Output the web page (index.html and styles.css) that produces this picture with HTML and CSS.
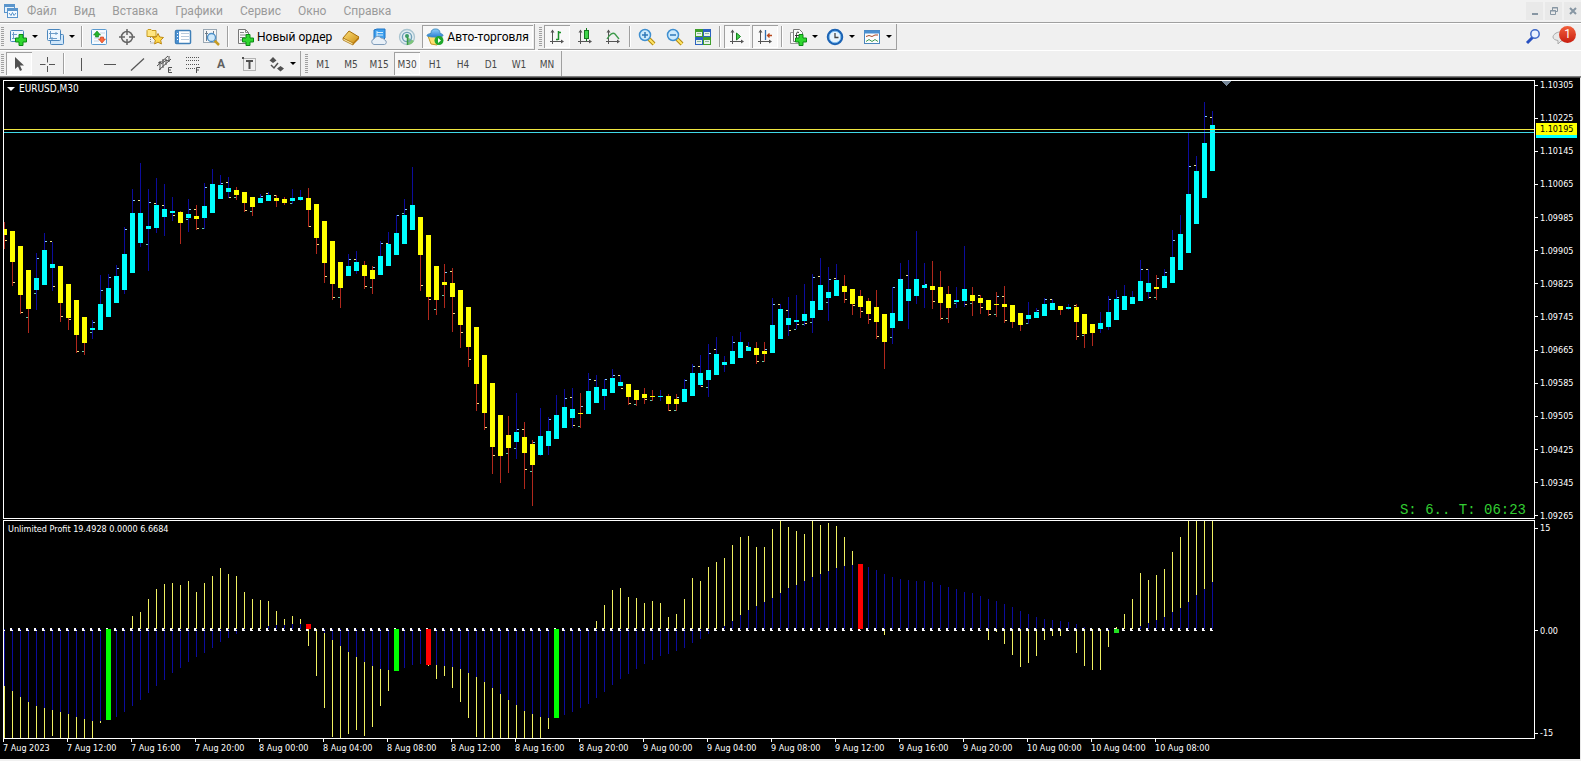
FILE: index.html
```
<!DOCTYPE html>
<html lang="ru">
<head>
    <meta charset="UTF-8">
    <meta name="viewport" content="width=device-width, initial-scale=1.0">
    <title>EURUSD,M30</title>
    <link rel="stylesheet" href="styles.css">
</head>
<body>
    <!-- shared icon parts -->
    <svg class="defs" aria-hidden="true">
        <defs>
            <linearGradient id="blueFill" x1="0" y1="0" x2="0" y2="1">
                <stop offset="0" stop-color="#8fd0fb"/>
                <stop offset="1" stop-color="#2a7fd4"/>
            </linearGradient>
            <linearGradient id="goldFill" x1="0" y1="0" x2="1" y2="1">
                <stop offset="0" stop-color="#ffe27a"/>
                <stop offset="1" stop-color="#c98a12"/>
            </linearGradient>
            <symbol id="plus" viewBox="0 0 12 12">
                <path d="M4 .5h4V4h3.500v4H8v3.500H4V8H.5V4H4z" fill="#2fd62f" stroke="#0a8a14"/>
            </symbol>
            <symbol id="axes" viewBox="0 0 18 18">
                <path d="M4.500 2v14M2 13.500h13" stroke="#555" fill="none"/>
                <path d="M2.500 4.500l2-3 2 3zM13 11.500l3 2-3 2z" fill="#555"/>
            </symbol>
            <symbol id="lens" viewBox="0 0 18 18">
                <path d="M11 11l5 5" stroke="#b48a10" stroke-width="4"/>
                <path d="M11 11l5 5" stroke="#ffe566" stroke-width="2"/>
                <circle cx="7" cy="7" r="5.500" fill="#cdeafc" stroke="#3f8fd0" stroke-width="1.500"/>
            </symbol>
        </defs>
    </svg>

    <header class="menubar">
        <svg class="app-icon" viewBox="0 0 16 16" aria-hidden="true">
            <rect x="1.500" y="1.500" width="10" height="8" fill="#e8f3fc" stroke="#5b95cc"/>
            <path d="M1 3h11" stroke="#5b95cc" stroke-width="2"/>
            <rect x="4.500" y="5.500" width="10" height="9" fill="#f4faff" stroke="#5b95cc"/>
            <path d="M4 7h11" stroke="#5b95cc" stroke-width="2"/>
            <path d="M6 10l2 2.500 1.500-3 1.500 3 2-2.500" stroke="#5b95cc" fill="none"/>
        </svg>
        <nav class="menu">
            <button>Файл</button>
            <button>Вид</button>
            <button>Вставка</button>
            <button>Графики</button>
            <button>Сервис</button>
            <button>Окно</button>
            <button>Справка</button>
        </nav>
        <div class="window-buttons">
            <button aria-label="Свернуть"><svg viewBox="0 0 10 10"><path d="M2 8h6" stroke="#8796a3" stroke-width="2"/></svg></button>
            <button aria-label="Восстановить"><svg viewBox="0 0 10 10"><path d="M3.500 4V1.500h5v4H7M3 2h6M1.500 4.500h5v4h-5zM1 5h6" stroke="#8796a3" fill="none"/></svg></button>
            <button aria-label="Закрыть"><svg viewBox="0 0 10 10"><path d="M2 2l6 6M8 2l-6 6" stroke="#8796a3" stroke-width="2"/></svg></button>
        </div>
    </header>

    <div class="toolbar-row">
        <div class="toolbar">
            <span class="grip"></span>
            <button class="tool dropdown" aria-label="Новый график">
                <svg class="icon" viewBox="0 0 18 18">
                    <rect x="1.500" y="2.500" width="13" height="11" rx="1" fill="#eef7ff" stroke="#4a86bd"/>
                    <path d="M4.500 4v7M3 10.500h6M3 6.500h5" stroke="#6d9cc8" fill="none"/>
                    <use href="#plus" x="6" y="6" width="12" height="12"/>
                </svg>
            </button>
            <button class="tool dropdown" aria-label="Профили">
                <svg class="icon" viewBox="0 0 18 18">
                    <rect x="4.500" y="6.500" width="13" height="10" rx="1" fill="#cfe6fa" stroke="#4a86bd"/>
                    <rect x="1.500" y="1.500" width="13" height="11" rx="1" fill="#eef7ff" stroke="#4a86bd"/>
                    <path d="M4.500 3v8M3 5.500h9M3 10.500h8M10 4v3M6 9v3" stroke="#6d9cc8" fill="none"/>
                </svg>
            </button>
            <span class="sep"></span>
            <button class="tool" aria-label="Обзор рынка">
                <svg class="icon" viewBox="0 0 18 18">
                    <rect x="1.500" y="1.500" width="15" height="15" rx="1" fill="#f5faff" stroke="#5b9bd0"/>
                    <path d="M4 10h10M4 13h5M10 5h5" stroke="#c5d4e2"/>
                    <path d="M7 3l3.500 4H8.500v2h-3V7h-2z" fill="#22b52c" stroke="#11801a" stroke-width=".6"/>
                    <path d="M12 15l-3.500-4h2V9h3v2h2z" fill="#ff6a3c" stroke="#c0391a" stroke-width=".6"/>
                </svg>
            </button>
            <button class="tool" aria-label="Окно данных">
                <svg class="icon" viewBox="0 0 18 18">
                    <circle cx="9" cy="9" r="5.500" fill="none" stroke="#666" stroke-width="1.500"/>
                    <path d="M9 1v6M9 11v6M1 9h6M11 9h6" stroke="#666" stroke-width="1.500"/>
                </svg>
            </button>
            <button class="tool" aria-label="Навигатор">
                <svg class="icon" viewBox="0 0 18 18">
                    <path d="M1 2.500l1-1h3l1 1h4v6H1z" fill="#ffe680" stroke="#c79a20"/>
                    <path d="M4.500 9v6h4" stroke="#888" stroke-dasharray="1 1" fill="none"/>
                    <path d="M12 5.500l1.700 3.500 3.800.500-2.800 2.700.700 3.800-3.400-1.900-3.400 1.900.700-3.800L6.500 9.500l3.800-.500z" fill="#ffd84a" stroke="#bd8914"/>
                </svg>
            </button>
            <button class="tool" aria-label="Терминал">
                <svg class="icon" viewBox="0 0 18 18">
                    <rect x="1.500" y="2.500" width="15" height="13" rx="1" fill="#fff" stroke="#3f7fb8" stroke-width="1.500"/>
                    <rect x="2" y="3" width="3" height="12" fill="#4a8fd0"/>
                    <path d="M7 5.500h8M7 8.500h8M7 11.500h8" stroke="#b9cbdd"/>
                    <path d="M3 5.500h1M3 8.500h1M3 11.500h1" stroke="#fff"/>
                </svg>
            </button>
            <button class="tool" aria-label="Тестер стратегий">
                <svg class="icon" viewBox="0 0 18 18">
                    <rect x="1.500" y="1.500" width="13" height="13" fill="#f6f6f6" stroke="#9aa8b4"/>
                    <path d="M4.500 3v10M3 5.500h3M11.500 3v4" stroke="#6b7c8c"/>
                    <path d="M12 12l5 5" stroke="#c79b22" stroke-width="2.500"/>
                    <circle cx="9.500" cy="9.500" r="4" fill="#cfe9fb" stroke="#4b8fc8" stroke-width="1.300"/>
                </svg>
            </button>
            <span class="sep"></span>
            <button class="tool labelled">
                <svg class="icon" viewBox="0 0 18 18">
                    <path d="M2.500 1.500h7l3 3v11h-10z" fill="#fafafa" stroke="#777"/>
                    <path d="M9.500 1.500v3h3M4 4.500h4M4 7h7M4 9.500h5M4 12h3" stroke="#888" fill="none"/>
                    <use href="#plus" x="6" y="6" width="12" height="12"/>
                </svg>
                <span>Новый ордер</span>
            </button>
            <button class="tool" aria-label="MetaEditor">
                <svg class="icon" viewBox="0 0 18 18">
                    <path d="M1 10l6-7 10 6-6 7z" fill="url(#goldFill)" stroke="#a8700c"/>
                    <path d="M1 10l10 5v2L1 12z" fill="#fff0b0" stroke="#a8700c" stroke-width=".8"/>
                    <path d="M11 15l6-6v2l-6 6z" fill="#b8780c"/>
                </svg>
            </button>
            <button class="tool" aria-label="Виртуальный хостинг">
                <svg class="icon" viewBox="0 0 18 18">
                    <path d="M4 2l3-1h8v9l-2 2H4z" fill="#3fa0ee" stroke="#1f74c4"/>
                    <path d="M7 3v7M7 4.500h6M7 7h6" stroke="#d8efff" fill="none"/>
                    <path d="M4 16.500a2.800 2.800 0 0 1 0-5.500 4 4 0 0 1 7-1 3 3 0 0 1 3.500 2 2.300 2.300 0 0 1 0 4.500z" fill="#e9f0f7" stroke="#7f9cba"/>
                </svg>
            </button>
            <button class="tool" aria-label="Сигналы">
                <svg class="icon" viewBox="0 0 18 18">
                    <circle cx="9" cy="9" r="7.500" fill="#e4eef2" stroke="#a9c4d0" stroke-width="1.300"/>
                    <path d="M9 9v8a8 8 0 0 0 7-4z" fill="#7cc47c"/>
                    <circle cx="9" cy="9" r="4.600" fill="none" stroke="#6f9fb8" stroke-width="1.400"/>
                    <circle cx="9" cy="8" r="2" fill="#3b9a66"/>
                    <path d="M9.500 9v8" stroke="#3b9a46" stroke-width="1.500"/>
                </svg>
            </button>
            <button class="tool labelled pressed">
                <svg class="icon" viewBox="0 0 18 18">
                    <path d="M2 8l3 8 6 1 5-9z" fill="#ffe070" stroke="#c49a26"/>
                    <path d="M5 5.500C5 2 7 1 9.500 1S14 2 14 5.500c2 .3 3 1 3 2 0 1-4 1.500-8 1.500S1 8.500 1 7.500s2-1.700 4-2z" fill="url(#blueFill)" stroke="#3f8cc0"/>
                    <circle cx="13" cy="12.500" r="4.500" fill="#1fa82c"/>
                    <path d="M12 10v5l3-2.500z" fill="#fff"/>
                </svg>
                <span>Авто-торговля</span>
            </button>
        </div>
        <div class="toolbar">
            <span class="grip"></span>
            <button class="tool pressed" aria-label="Бары">
                <svg class="icon" viewBox="0 0 18 18"><use href="#axes"/><path d="M10.500 3v9M10 11.500H8M11 4.500h2" stroke="#1b8f28" stroke-width="1.500"/></svg>
            </button>
            <button class="tool" aria-label="Свечи">
                <svg class="icon" viewBox="0 0 18 18"><use href="#axes"/><path d="M10.500 0v13" stroke="#147a1e"/><rect x="8.500" y="2.500" width="4" height="8" fill="#3fd44a" stroke="#147a1e"/></svg>
            </button>
            <button class="tool" aria-label="Линия">
                <svg class="icon" viewBox="0 0 18 18"><use href="#axes"/><path d="M3 11c3-5 6-7 8-5l4 5" stroke="#3c9a4a" stroke-width="1.300" fill="none"/></svg>
            </button>
            <span class="sep"></span>
            <button class="tool" aria-label="Увеличить">
                <svg class="icon" viewBox="0 0 18 18"><use href="#lens"/><path d="M4 7h6M7 4v6" stroke="#2f78b8" stroke-width="1.500"/></svg>
            </button>
            <button class="tool" aria-label="Уменьшить">
                <svg class="icon" viewBox="0 0 18 18"><use href="#lens"/><path d="M4 7h6" stroke="#2f78b8" stroke-width="1.500"/></svg>
            </button>
            <button class="tool" aria-label="Выстроить окна">
                <svg class="icon" viewBox="0 0 18 18">
                    <path d="M1 1h8v8H1zM9 9h8v8H9z" fill="#3f9e2c"/>
                    <path d="M9 1h8v8H9zM1 9h8v8H1z" fill="#2c62c0"/>
                    <path d="M2 4h6v4H2zM10 4h6v4h-6zM2 12h6v4H2zM10 12h6v4h-6z" fill="#e9f3ea"/>
                    <path d="M3 5.500h4M11 5.500h4M3 13.500h4M11 13.500h4" stroke="#8db59a"/>
                </svg>
            </button>
            <span class="sep"></span>
            <button class="tool pressed" aria-label="Автопрокрутка">
                <svg class="icon" viewBox="0 0 18 18"><use href="#axes"/><path d="M8.500 5v7l4-3.500z" fill="#45cf4c" stroke="#14801e"/></svg>
            </button>
            <button class="tool pressed" aria-label="Сдвиг графика">
                <svg class="icon" viewBox="0 0 18 18"><use href="#axes"/><path d="M9.500 2v10" stroke="#2f6fb0" stroke-width="1.300"/><path d="M16 7.500h-4M13.500 5.500l-2 2 2 2" stroke="#b8481c" stroke-width="1.300" fill="none"/></svg>
            </button>
            <span class="sep"></span>
            <button class="tool dropdown" aria-label="Индикаторы">
                <svg class="icon" viewBox="0 0 18 18">
                    <path d="M1.500 4.500h8v11h-8z" fill="#fafafa" stroke="#999"/>
                    <path d="M4.500 1.500h6l3 3v9h-9z" fill="#fafafa" stroke="#777"/>
                    <path d="M10 4.500c-2-1-2.500 0-2.500 2V11M6 7.500h4" stroke="#333" fill="none"/>
                    <use href="#plus" x="6" y="6" width="12" height="12"/>
                </svg>
            </button>
            <button class="tool dropdown" aria-label="Периоды">
                <svg class="icon" viewBox="0 0 18 18">
                    <circle cx="9" cy="9" r="7" fill="#e8f4fd" stroke="#1c63b4" stroke-width="2.500"/>
                    <circle cx="9" cy="9" r="5.800" fill="none" stroke="#7fbdf0"/>
                    <path d="M9 5v4.500h3.500" stroke="#444" stroke-width="1.300" fill="none"/>
                </svg>
            </button>
            <button class="tool dropdown" aria-label="Шаблоны">
                <svg class="icon" viewBox="0 0 18 18">
                    <rect x="1.500" y="2.500" width="15" height="13" fill="#fdfdfd" stroke="#4a86bd"/>
                    <path d="M1 4h16" stroke="#4a8fd0" stroke-width="3"/>
                    <path d="M3 8.500l3-1 3 1 3-1.500h3" stroke="#a84a2a" fill="none"/>
                    <path d="M3 13.500l3-2 3 2 3-2 3 2" stroke="#3d9a50" fill="none"/>
                </svg>
            </button>
        </div>
        <div class="status-tools">
            <button class="tool" aria-label="Поиск">
                <svg class="icon" viewBox="0 0 18 18"><path d="M9 10l-6 6" stroke="#2850c0" stroke-width="3"/><circle cx="11" cy="7" r="4.200" fill="#eaf2ff" stroke="#3f69c8" stroke-width="1.500"/></svg>
            </button>
            <button class="tool chat" aria-label="Сообщения">
                <svg class="icon" viewBox="0 0 18 18"><path d="M8 5c5 0 8 2 8 5s-3 4-7 4l-3 3v-3.500C3 13 1 12 1 10s3-5 7-5z" fill="#e8e8e8" stroke="#aaa"/></svg>
                <span class="badge">1</span>
            </button>
        </div>
    </div>

    <div class="toolbar-row second">
        <div class="toolbar">
            <span class="grip"></span>
            <button class="tool pressed" aria-label="Курсор">
                <svg class="icon" viewBox="0 0 18 18"><path d="M5 2v12l3-2.500 2 4.500 2-1-2-4.500h4z" fill="#505050"/></svg>
            </button>
            <button class="tool" aria-label="Перекрестие">
                <svg class="icon" viewBox="0 0 18 18"><path d="M9.500 2v5.500M9.500 11v6M2 9.500h5.500M11 9.500h6" stroke="#555"/></svg>
            </button>
            <span class="sep"></span>
            <button class="tool" aria-label="Вертикальная линия">
                <svg class="icon" viewBox="0 0 18 18"><path d="M9.500 3v13" stroke="#555"/></svg>
            </button>
            <button class="tool" aria-label="Горизонтальная линия">
                <svg class="icon" viewBox="0 0 18 18"><path d="M4 9.500h12" stroke="#555"/></svg>
            </button>
            <button class="tool" aria-label="Трендовая линия">
                <svg class="icon" viewBox="0 0 18 18"><path d="M3 15.500l13-12" stroke="#555" stroke-width="1.200"/></svg>
            </button>
            <button class="tool" aria-label="Канал">
                <svg class="icon" viewBox="0 0 18 18">
                    <path d="M1 11L12 1M3 15L15 4M4 6v9M7 4v9M10 4v6M13 1v6M2 8l3-1M5 9l4-3M9 5l4 1" stroke="#505050" fill="none"/>
                    <path d="M16 12.500h-3.500v5H16M12.500 15H15" stroke="#505050" fill="none"/>
                </svg>
            </button>
            <button class="tool" aria-label="Фибоначчи">
                <svg class="icon" viewBox="0 0 18 18">
                    <path d="M2 2.500h14M2 5.500h14M2 9.500h14M2 13.500h9" stroke="#555" stroke-dasharray="1 1"/>
                    <path d="M16 12.500h-3.500V18M12.500 15H15" stroke="#505050" fill="none"/>
                </svg>
            </button>
            <button class="tool letter">A</button>
            <button class="tool" aria-label="Текстовая метка">
                <svg class="icon" viewBox="0 0 18 18"><rect x="3.500" y="3.500" width="12" height="12" fill="none" stroke="#777" stroke-dasharray="1 1"/><path d="M6 6h7M9.500 6v8" stroke="#505050" stroke-width="2"/><path d="M2 2h2v2H2z" fill="#505050"/></svg>
            </button>
            <button class="tool dropdown" aria-label="Стрелки">
                <svg class="icon" viewBox="0 0 18 18"><path d="M6 2l3.500 3.500L6 8 2.500 5.500zM13.500 11l3.500 2.500-3.500 3-3.500-3z" fill="#505050"/><path d="M4 10l3 3 4-5" stroke="#505050" stroke-width="1.500" fill="none"/></svg>
            </button>
        </div>
        <div class="toolbar">
            <span class="grip"></span>
            <button class="tool period">M1</button>
            <button class="tool period">M5</button>
            <button class="tool period">M15</button>
            <button class="tool period pressed">M30</button>
            <button class="tool period">H1</button>
            <button class="tool period">H4</button>
            <button class="tool period">D1</button>
            <button class="tool period">W1</button>
            <button class="tool period">MN</button>
        </div>
    </div>

    <main class="chart">
        <div class="panes">
            <section class="pane">
                <svg id="price" class="plot price-plot"></svg>
                <h1 class="pane-title symbol"><span class="triangle"></span>EURUSD,M30</h1>
                <p class="countdown">S: 6.. T: 06:23</p>
            </section>
            <section class="pane">
                <svg id="profit" class="plot profit-plot"></svg>
                <h2 class="pane-title">Unlimited Profit 19.4928 0.0000 6.6684</h2>
            </section>
        </div>
        <div class="axes">
            <ul class="scale price-scale">
                <li>1.10305</li>
                <li>1.10225</li>
                <li>1.10145</li>
                <li>1.10065</li>
                <li>1.09985</li>
                <li>1.09905</li>
                <li>1.09825</li>
                <li>1.09745</li>
                <li>1.09665</li>
                <li>1.09585</li>
                <li>1.09505</li>
                <li>1.09425</li>
                <li>1.09345</li>
                <li>1.09265</li>
            </ul>
            <ul class="scale profit-scale">
                <li>15</li>
                <li>0.00</li>
                <li>-15</li>
            </ul>
            <span class="price-tag">1.10195</span>
        </div>
        <ul class="times">
            <li>7 Aug 2023</li>
            <li>7 Aug 12:00</li>
            <li>7 Aug 16:00</li>
            <li>7 Aug 20:00</li>
            <li>8 Aug 00:00</li>
            <li>8 Aug 04:00</li>
            <li>8 Aug 08:00</li>
            <li>8 Aug 12:00</li>
            <li>8 Aug 16:00</li>
            <li>8 Aug 20:00</li>
            <li>9 Aug 00:00</li>
            <li>9 Aug 04:00</li>
            <li>9 Aug 08:00</li>
            <li>9 Aug 12:00</li>
            <li>9 Aug 16:00</li>
            <li>9 Aug 20:00</li>
            <li>10 Aug 00:00</li>
            <li>10 Aug 04:00</li>
            <li>10 Aug 08:00</li>
        </ul>
    </main>

    <script src="chart.js"></script>
</body>
</html>
```
FILE: styles.css
```
* {
    box-sizing: border-box;
}

body {
    margin: 0;
    font-family: Roboto, "Open Sans", sans-serif;
    font-size: 12px;
    background-color: #f0f0f0;
    color: #000;
}

button {
    font: inherit;
    color: inherit;
    background: none;
    border: none;
    padding: 0;
    margin: 0;
}

ul {
    list-style: none;
    margin: 0;
    padding: 0;
}

svg {
    display: block;
}

.defs {
    position: absolute;
    width: 0;
    height: 0;
}

/* menu */
.menubar {
    display: flex;
    align-items: center;
    height: 23px;
    padding-left: 3px;
    border-bottom: 1px solid #a0a0a0;
    background-color: #f1f1f1;
}

.app-icon {
    width: 16px;
    height: 16px;
}

.menu {
    display: flex;
    flex: 1;
    gap: 17px;
    padding-left: 8px;
    color: #9a9a9a;
}

.window-buttons {
    display: flex;
    gap: 2px;
}

.window-buttons button {
    display: flex;
    align-items: center;
    justify-content: center;
    width: 17px;
    height: 18px;
    background-color: #e9e9e9;
}

.window-buttons svg {
    width: 10px;
    height: 10px;
}

/* toolbars */
.toolbar-row {
    display: flex;
    gap: 3px;
    height: 27px;
    border-top: 1px solid #fff;
}

.toolbar {
    display: flex;
    align-items: center;
    gap: 2px;
    padding: 0 1px;
    border-right: 1px solid #a0a0a0;
    border-bottom: 1px solid #a0a0a0;
}

.second {
    border-bottom: 1px solid #808080;
}

.second .toolbar {
    border-bottom: none;
}

.grip {
    width: 3px;
    height: 20px;
    background: repeating-linear-gradient(#a0a0a0 0 1px, #f0f0f0 1px 2px);
}

.sep {
    width: 2px;
    height: 21px;
    margin: 0 1px;
    border-left: 1px solid #a0a0a0;
    border-right: 1px solid #fff;
}

.tool {
    display: flex;
    align-items: center;
    justify-content: center;
    width: 26px;
    height: 23px;
}

.icon {
    width: 18px;
    height: 18px;
    flex: none;
}

.dropdown {
    width: 35px;
    justify-content: flex-start;
    gap: 5px;
    padding-left: 3px;
}

.dropdown::after {
    content: "";
    border: 3px solid transparent;
    border-top-color: #000;
    border-bottom: none;
}

.labelled {
    width: auto;
    padding: 0 4px;
    gap: 3px;
}

.pressed {
    background-color: #f8f8f8;
    box-shadow: inset 1px 1px #a0a0a0, inset -1px -1px #fff;
}

.letter {
    font-weight: bold;
    color: #606060;
}

.period {
    padding-top: 2px;
    font-family: "DejaVu Sans Condensed", "DejaVu Sans", sans-serif;
    font-size: 10px;
    color: #484848;
}

.status-tools {
    display: flex;
    gap: 2px;
    margin-left: auto;
    padding-right: 7px;
}

.chat {
    position: relative;
}

.badge {
    position: absolute;
    top: 2px;
    right: -2px;
    width: 17px;
    border-radius: 50%;
    background: linear-gradient(#f2603c, #c81e10);
    color: #fff;
    line-height: 17px;
    text-align: center;
}

/* chart */
.chart {
    display: grid;
    grid-template-columns: 1fr 45px;
    padding-left: 3px;
    border-top: 1px solid #404040;
    border-left: 1px solid #606060;
    border-right: 1px solid #e8e8e8;
    background-color: #000;
    color: #fff;
    font-family: "DejaVu Sans Condensed", "DejaVu Sans", sans-serif;
    font-size: 9px;
    line-height: 12px;
    margin-left: -1px;
}

.panes {
    display: flex;
    flex-direction: column;
    gap: 1px;
    padding-top: 2px;
    min-width: 0;
}

.pane {
    position: relative;
    border: 1px solid #fff;
}

.plot {
    width: 100%;
    shape-rendering: crispEdges;
}

.price-plot {
    height: 437px;
}

.profit-plot {
    height: 217px;
}

.pane-title {
    position: absolute;
    top: 2px;
    left: 4px;
    display: flex;
    align-items: center;
    gap: 4px;
    margin: 0;
    font-size: inherit;
    font-weight: normal;
}

.symbol {
    left: 3px;
    font-size: 10px;
}

.triangle {
    border: 4px solid transparent;
    border-top-color: #fff;
    border-bottom: none;
}

.countdown {
    position: absolute;
    right: 8px;
    bottom: 2px;
    margin: 0;
    font-family: "Liberation Mono", monospace;
    font-size: 14px;
    color: #32cd32;
}

.axes {
    position: relative;
    display: flex;
    flex-direction: column;
    padding-top: 1px;
}

.scale {
    display: flex;
    flex-direction: column;
    justify-content: space-between;
}

.scale li {
    display: flex;
    align-items: center;
    gap: 2px;
}

.scale li::before {
    content: "";
    width: 3px;
    height: 1px;
    background-color: #fff;
}

.price-scale {
    height: 443px;
}

.profit-scale {
    flex: 1;
}

.price-tag {
    position: absolute;
    top: 45px;
    left: 1px;
    width: 41px;
    padding-left: 4px;
    background-color: #ff0;
    border-bottom: 3px solid #0ff;
    color: #000;
}

.times {
    display: flex;
    grid-column: 1 / -1;
    height: 20px;
}

.times li {
    width: 64px;
    white-space: nowrap;
}

.times li::before {
    content: "";
    display: block;
    width: 1px;
    height: 3px;
    background-color: #fff;
}
```
FILE: chart.js
```
const NS = "http://www.w3.org/2000/svg";
const STEP = 8;

// d = down / u = up, then high, body top, body bottom, low
const candles = `
d222,229,235,249 d231,231,262,286 d246,246,295,314 d270,270,309,333 u253,278,290,310
u233,250,285,285 u242,264,268,291 d266,266,303,322 d284,284,318,330 d300,300,335,353
d317,317,343,355 u320,328,330,339 u275,304,330,330 u274,288,317,317 u265,276,303,303
u227,254,290,294 u189,213,273,273 u163,213,243,247 u189,226,229,271 u178,205,228,233
u184,209,217,236 u197,211,213,221 d211,212,223,244 u199,214,218,232 d205,216,219,230
u183,206,218,229 u169,184,213,213 u175,185,199,199 u177,188,192,198 d187,190,195,200
d192,192,203,212 d197,197,207,216 u194,198,203,203 u192,195,201,201 d195,198,201,207
d197,199,203,205 u189,198,201,204 u190,197,200,201 d188,198,210,227 d204,204,238,254
d221,221,263,283 d241,241,284,300 d262,262,288,308 u254,266,276,276 u251,262,271,274
d261,265,276,289 d266,270,279,294 u241,256,275,275 u232,244,266,266 u215,233,255,255
u199,215,244,244 u167,205,230,230 d217,217,255,291 d235,235,297,320 d266,266,300,315
d264,282,285,308 d268,283,297,332 d290,290,325,348 d307,307,347,367 d327,327,384,411
d355,355,413,430 d383,383,447,474 d415,415,456,483 d416,435,448,473 u393,432,442,459
d422,437,453,489 d440,444,465,506 u408,436,455,456 u417,431,446,455 u395,415,439,439
u389,407,428,428 u388,409,418,428 d393,413,414,428 u373,391,414,414 u375,387,403,403
u379,389,396,410 u369,378,393,393 u375,382,386,386 d384,384,397,405 d390,390,400,406
d388,394,398,404 d390,396,397,401 u390,396,397,401 d394,396,404,411 d394,399,404,411
u379,389,402,402 u364,373,396,396 u355,373,385,387 u344,370,380,397 u337,354,375,375
u356,362,365,372 u336,351,364,364 u332,342,358,358 u342,347,351,351 d342,348,355,364
d342,351,354,362 u298,325,353,353 u304,309,339,339 u297,318,325,336 u295,320,322,329
u284,314,321,326 u274,301,318,333 u258,285,310,310 u267,292,298,321 u264,280,296,296
d275,286,292,303 d289,289,304,315 d290,296,307,318 d298,301,314,324 d290,307,322,339
d314,314,342,369 u287,313,328,344 u263,279,321,321 u260,289,301,329 u231,279,296,304
u263,285,288,308 d261,286,290,309 d271,287,303,320 d286,294,308,323 u287,300,302,308
u246,289,301,307 d287,295,301,316 d295,298,303,314 d300,300,310,316 d292,304,305,317
d286,304,307,323 d305,305,322,328 d313,313,325,331 u302,315,319,324 u308,312,318,318
u298,304,316,316 u299,303,310,310 d306,306,310,315 u304,307,309,310 d304,307,322,340
d314,314,334,348 d324,324,333,346 u312,323,329,333 u296,312,327,330 u290,299,320,320
u285,296,310,310 u291,297,304,304 u260,281,301,301 u269,283,292,299 d275,287,289,300
u269,276,288,288 u230,257,283,283 u215,234,270,270 u132,194,253,253 u156,171,224,224
u102,143,198,198 u111,125,171,171`.trim().split(/\s+/);

// small marks beside the wicks, bar index:y
const marks = [
    { dx: 1, color: "#87cefa", points: "4:258 5:241 11:322 12:290 13:277 14:268 15:229 16:200 18:202 23:209 25:187 27:183 32:196 43:259 46:267 47:243 49:215 50:209 55:272 64:429 66:442 68:419 70:398 72:406 73:379 75:379 76:375 84:397 85:380 86:366 88:353 91:342 95:349 96:304 101:277 103:279 111:287 112:279 115:284 124:296 129:310 130:299 138:299 139:297 142:269 144:278 145:272 146:240 148:166 150:116" },
    { dx: -2, color: "#f0e68c", points: "6:241 17:200 19:203 20:205 24:209 28:182 33:193 34:195 44:259 48:243 56:271 65:429 71:397 74:380 77:375 87:366 89:349 93:346 97:304 98:310 102:276 104:278 113:275 122:295 125:296 131:299 134:305 143:269 149:165 151:117" },
    { dx: 1, color: "#ffe080", points: "0:240 1:282 2:312 6:286 7:316 8:319 9:351 21:215 24:228 28:197 30:210 38:226 39:244 40:276 41:297 45:286 52:285 53:299 56:313 57:332 58:359 59:403 60:427 61:455 65:469 71:425 77:388 78:403 80:399 83:410 87:386 94:361 98:330 99:324 100:323 105:299 106:305 107:311 108:319 109:336 116:301 117:318 120:304 122:307 123:314 125:320 134:336 143:297" },
    { dx: -2, color: "#66cdaa", points: "3:317 4:293 10:351 11:332 18:244 23:219 25:228 29:197 31:211 36:203 42:297 46:287 50:213 54:309 55:295 63:453 64:448 66:471 72:426 79:404 81:400 84:410 88:387 95:361 99:329 100:324 101:322 103:302 111:337 118:318 119:303 121:303 124:314 128:323 135:335 144:297" }
];

const ZERO = 629;

// slow histogram
const slow = [
    686, 691, 697, 702, 706, 708, 710, 712, 714, 717, 719, 721, 721, 720, 717, 712, 706, 700, 693, 686,
    680, 673, 668, 662, 657, 653, 648, 642, 638, 634, 631, 629, 629, 626, 625, 625, 624, 624, 624, 629,
    633, 640, 646, 652, 657, 662, 666, 669, 670, 671, 668, 665, 664, 665, 665, 666, 667, 669, 673, 677,
    682, 688, 694, 700, 705, 711, 714, 717, 718, 718, 715, 712, 708, 704, 698, 692, 685, 679, 674, 669,
    664, 660, 656, 654, 651, 648, 643, 639, 634, 629, 626, 621, 615, 610, 606, 602, 598, 593, 588, 585,
    581, 577, 574, 571, 568, 566, 565, 564, 567, 570, 574, 577, 579, 580, 581, 581, 582, 585, 587, 589,
    592, 593, 596, 599, 601, 604, 607, 611, 614, 617, 619, 620, 621, 622, 624, 627, 629, 629, 631, 633,
    629, 629, 626, 623, 620, 617, 612, 608, 602, 595, 589, 582
];

// fast histogram
const fast = [
    738, 738, 738, 738, 738, 738, 736, 738, 738, 738, 738, 738, 723, 629, 629, 629, 616, 612, 599, 589,
    584, 583, 585, 581, 592, 583, 576, 568, 574, 576, 592, 599, 600, 601, 611, 619, 616, 619, 646, 676,
    708, 737, 738, 734, 730, 736, 727, 706, 691, 629, 629, 629, 629, 666, 679, 676, 688, 702, 718, 737,
    738, 738, 738, 738, 738, 738, 738, 738, 729, 629, 629, 629, 629, 629, 621, 605, 590, 588, 597, 598,
    603, 601, 603, 617, 614, 599, 578, 581, 567, 562, 558, 545, 537, 536, 547, 547, 529, 521, 527, 531,
    534, 521, 525, 523, 526, 537, 551, 629, 629, 629, 635, 629, 629, 629, 629, 629, 629, 629, 629, 629,
    629, 629, 629, 640, 632, 644, 655, 667, 663, 656, 640, 636, 636, 629, 653, 666, 670, 670, 647, 627,
    614, 599, 573, 580, 575, 569, 552, 537, 521, 521, 521, 521
];

const signals = { 13: "#00ff00", 38: "#ff0000", 49: "#00ff00", 53: "#ff0000", 69: "#00ff00", 107: "#ff0000", 139: "#22e022" };

function rect(parent, x, y, width, height, fill) {
    const el = document.createElementNS(NS, "rect");
    el.setAttribute("x", x);
    el.setAttribute("y", y);
    el.setAttribute("width", width);
    el.setAttribute("height", height);
    el.setAttribute("fill", fill);
    parent.appendChild(el);
}

// vertical bar from y1 to y2, any order
function bar(parent, x, y1, y2, width, fill) {
    rect(parent, x, Math.min(y1, y2), width, Math.abs(y2 - y1), fill);
}

function drawPrice() {
    const svg = document.getElementById("price");
    const top = 81;

    candles.forEach((candle, i) => {
        const up = candle[0] === "u";
        const [high, open, close, low] = candle.slice(1).split(",").map(v => v - top);
        const x = i * STEP;
        bar(svg, x, high, low, 1, up ? "#0c0c9c" : "#b0281c");
        bar(svg, x - 2, open, close, 5, up ? "#00ffff" : "#ffff00");
    });

    marks.forEach(({ dx, color, points }) => {
        points.split(" ").forEach(point => {
            const [i, y] = point.split(":");
            rect(svg, i * STEP + dx, y - top, 2, 1, color);
        });
    });

    // ask and bid lines
    rect(svg, 0, 129 - top, "100%", 1, "#f0e640");
    rect(svg, 0, 132 - top, "100%", 1, "#40d8e8");

    // chart shift marker
    const marker = document.createElementNS(NS, "path");
    marker.setAttribute("d", "M1217 0h10l-5 5z");
    marker.setAttribute("fill", "#778899");
    svg.appendChild(marker);
}

function drawProfit() {
    const svg = document.getElementById("profit");
    const top = 521;

    slow.forEach((value, i) => {
        const x = i * STEP;
        bar(svg, x, ZERO - top, fast[i] - top, 1, "#f0f060");
        bar(svg, x, ZERO - top, value - top, 1, "#0c0c9c");
        rect(svg, x - 2, ZERO - 1 - top, 2, 3, "#fff");
        rect(svg, x, ZERO + 1 - top, 1, 1, "#fff");
        if (signals[i]) {
            bar(svg, x - 2, ZERO - top, value - top, 5, signals[i]);
        }
    });
}

drawPrice();
drawProfit();
```
